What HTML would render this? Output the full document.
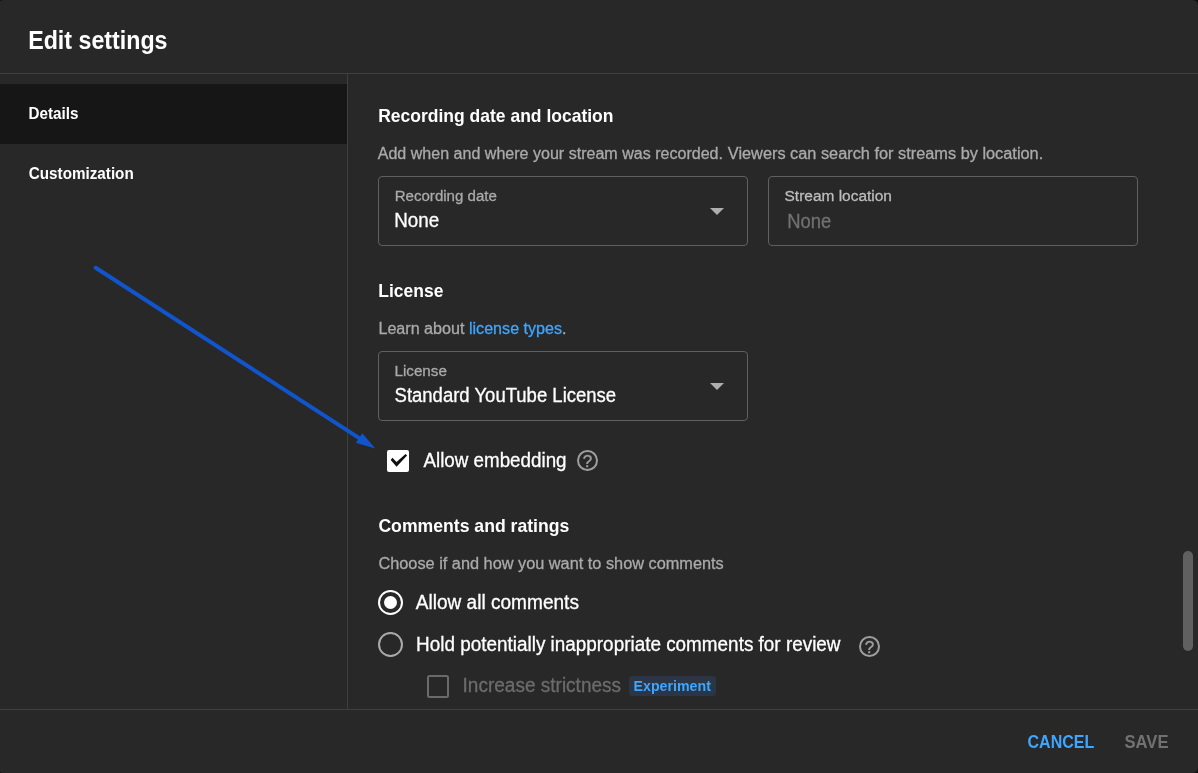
<!DOCTYPE html>
<html lang="en"><head><meta charset="utf-8"><title>Edit settings</title>
<style>
html,body{margin:0;padding:0}
body{width:1198px;height:773px;background:#0f0f0f;position:relative;overflow:hidden;font-family:"Liberation Sans",Arial,sans-serif}
.t{transform-origin:0 0;position:absolute;white-space:nowrap;line-height:normal;margin:0}
.lnk{color:#3ea6ff;-webkit-text-stroke-color:#3ea6ff}
.abs{position:absolute}
.hline{position:absolute;left:0;width:1198px;height:1px;background:#3f3f3f}
.vline{position:absolute;left:347px;top:73px;width:1px;height:636px;background:#3f3f3f}
.navsel{position:absolute;left:0;top:84px;width:347px;height:60px;background:#161616}
.field{position:absolute;box-sizing:border-box;width:370px;height:70px;border:1px solid #606060;border-radius:4px}
.caret{position:absolute;width:0;height:0;border-left:7px solid transparent;border-right:7px solid transparent;border-top:7.2px solid #aeaeae}
.cbx{position:absolute;left:387px;top:450px;width:22px;height:22px;background:#fff;border-radius:2px}
.cbx2{position:absolute;box-sizing:border-box;left:427px;top:675px;width:22px;height:23px;border:2px solid #6a6a6a;border-radius:2.5px}
.radio{position:absolute;box-sizing:border-box;left:378px;width:25px;height:25px;border-radius:50%}
.badge{position:absolute;left:629px;top:676px;width:87px;height:20px;background:#2a3646;border-radius:3px}
.thumb{position:absolute;left:1183px;top:551px;width:9.5px;height:100px;border-radius:5px;background:#606060}
svg{position:absolute;left:0;top:0;overflow:visible}
.q{font-size:17px;color:#9e9e9e;-webkit-text-stroke:0.4px #9e9e9e}
#L{position:absolute;left:0;top:0;width:1198px;height:773px;will-change:transform}
.panel{position:absolute;left:-2px;top:0;width:1200px;height:773px;border-radius:5.5px;background:#282828}

#t_title{left:28px;top:26px;font-size:25px;font-weight:bold;color:#fff;transform:translateX(0.17px) scaleX(0.9286)}
#t_nav1{left:28px;top:104px;font-size:16.5px;font-weight:bold;color:#fff;transform:translateX(0.48px) scaleX(0.9228)}
#t_nav2{left:28px;top:164px;font-size:16.5px;font-weight:bold;color:#fff;transform:translateX(0.81px) scaleX(0.9229)}
#t_h1{left:378px;top:105px;font-size:19px;font-weight:bold;color:#fff;transform:translateX(0.14px) scaleX(0.9212)}
#t_d1{left:377px;top:145px;font-size:16px;color:#aaa;transform:translateX(0.73px) scaleX(1.0031);-webkit-text-stroke:0.3px #aaa}
#t_d1b{left:727px;top:145px;font-size:16px;color:#aaa;transform:translateX(0.80px) scaleX(1.0202);-webkit-text-stroke:0.3px #aaa}
#t_l1{left:394px;top:187px;font-size:15.5px;color:#aaa;transform:translateX(0.65px) scaleX(0.9729);-webkit-text-stroke:0.3px #aaa}
#t_v1{left:394px;top:209px;font-size:19.5px;color:#fff;transform:translateX(0.20px) scaleX(0.9637);-webkit-text-stroke:0.3px #fff}
#t_l2{left:784px;top:187px;font-size:15.5px;color:#bdbdbd;transform:translateX(0.57px) scaleX(0.9963);-webkit-text-stroke:0.3px #bdbdbd}
#t_v2{left:787px;top:210px;font-size:19.5px;color:#717171;transform:translateX(0.13px) scaleX(0.9437);-webkit-text-stroke:0.3px #717171}
#t_h2{left:378px;top:280px;font-size:19px;font-weight:bold;color:#fff;transform:translateX(0.33px) scaleX(0.9203)}
#t_d2{left:378px;top:320px;font-size:16px;color:#aaa;transform:translateX(0.42px) scaleX(1.0072);-webkit-text-stroke:0.3px #aaa}
#t_l3{left:394px;top:362px;font-size:15.5px;color:#aaa;transform:translateX(0.45px) scaleX(0.9805);-webkit-text-stroke:0.3px #aaa}
#t_v3{left:394px;top:384px;font-size:19.5px;color:#fff;transform:translateX(0.54px) scaleX(0.9491);-webkit-text-stroke:0.3px #fff}
#t_cb{left:423px;top:449px;font-size:19.5px;color:#fff;transform:translateX(0.42px) scaleX(0.9638);-webkit-text-stroke:0.3px #fff}
#t_h3{left:378px;top:515px;font-size:19px;font-weight:bold;color:#fff;transform:translateX(0.39px) scaleX(0.9276)}
#t_d3{left:378px;top:555px;font-size:16px;color:#aaa;transform:translateX(0.41px) scaleX(1.0192);-webkit-text-stroke:0.3px #aaa}
#t_r1{left:415px;top:591px;font-size:19.5px;color:#fff;transform:translateX(0.75px) scaleX(0.9778);-webkit-text-stroke:0.3px #fff}
#t_r2{left:416px;top:633px;font-size:19.5px;color:#fff;transform:translateX(0.11px) scaleX(0.9692);-webkit-text-stroke:0.3px #fff}
#t_cb2{left:462px;top:674px;font-size:19.5px;color:#6c6c6c;transform:translateX(0.59px) scaleX(0.9747);-webkit-text-stroke:0.3px #6c6c6c}
#t_exp{left:633px;top:677px;font-size:15px;font-weight:bold;color:#3ea6ff;transform:translateX(0.50px) scaleX(0.9480)}
#t_cancel{left:1027px;top:732px;font-size:18px;font-weight:bold;color:#3ea6ff;transform:translateX(0.48px) scaleX(0.8907)}
#t_save{left:1124px;top:732px;font-size:18px;font-weight:bold;color:#717171;transform:translateX(0.42px) scaleX(0.9250)}
</style></head>
<body>
<div class="panel"></div>
<div id="L">
<div class="hline" style="top:73px"></div>
<div class="hline" style="top:709px"></div>
<div class="vline"></div>
<div class="navsel"></div>
<div class="field" style="left:378px;top:176px"></div>
<div class="field" style="left:768px;top:176px"></div>
<div class="field" style="left:378px;top:351px"></div>
<div class="caret" style="left:710px;top:208px"></div>
<div class="caret" style="left:710px;top:383px"></div>
<div class="cbx"></div>
<div class="cbx2"></div>
<div class="radio" style="top:590px;border:2px solid #fff"></div>
<div class="abs" style="left:384px;top:596px;width:13px;height:13px;border-radius:50%;background:#fff"></div>
<div class="radio" style="top:632px;border:2px solid #aaa"></div>
<div class="badge"></div>
<div class="thumb"></div>
<svg width="1198" height="773" viewBox="0 0 1198 773">
  <polygon points="390.7,459.9 392.4,457.8 396.55,462.1 405.5,453.9 407.1,455.6 396.55,466.7" fill="#0f0f0f"/>
  <line x1="95.7" y1="267.8" x2="360" y2="438.6" stroke="#1155cc" stroke-width="4" stroke-linecap="round"/>
  <polygon points="375.2,448.5 362.3,433.2 355.8,442.7" fill="#1155cc"/>
  <circle cx="587.5" cy="460.5" r="9.5" fill="none" stroke="#9e9e9e" stroke-width="2"/>
  <circle cx="869.5" cy="646.5" r="9.5" fill="none" stroke="#9e9e9e" stroke-width="2"/>
</svg>
<div class="t q" style="left:582.8px;top:452px">?</div>
<div class="t q" style="left:864.8px;top:638px">?</div>

<div class="t" id="t_title">Edit settings</div>
<div class="t" id="t_nav1">Details</div>
<div class="t" id="t_nav2">Customization</div>
<div class="t" id="t_h1">Recording date and location</div>
<div class="t" id="t_d1">Add when and where your stream was recorded.</div>
<div class="t" id="t_d1b">Viewers can search for streams by location.</div>
<div class="t" id="t_l1">Recording date</div>
<div class="t" id="t_v1">None</div>
<div class="t" id="t_l2">Stream location</div>
<div class="t" id="t_v2">None</div>
<div class="t" id="t_h2">License</div>
<div class="t" id="t_d2">Learn about <span class="lnk">license types</span>.</div>
<div class="t" id="t_l3">License</div>
<div class="t" id="t_v3">Standard YouTube License</div>
<div class="t" id="t_cb">Allow embedding</div>
<div class="t" id="t_h3">Comments and ratings</div>
<div class="t" id="t_d3">Choose if and how you want to show comments</div>
<div class="t" id="t_r1">Allow all comments</div>
<div class="t" id="t_r2">Hold potentially inappropriate comments for review</div>
<div class="t" id="t_cb2">Increase strictness</div>
<div class="t" id="t_exp">Experiment</div>
<div class="t" id="t_cancel">CANCEL</div>
<div class="t" id="t_save">SAVE</div>
</div>
</body></html>
